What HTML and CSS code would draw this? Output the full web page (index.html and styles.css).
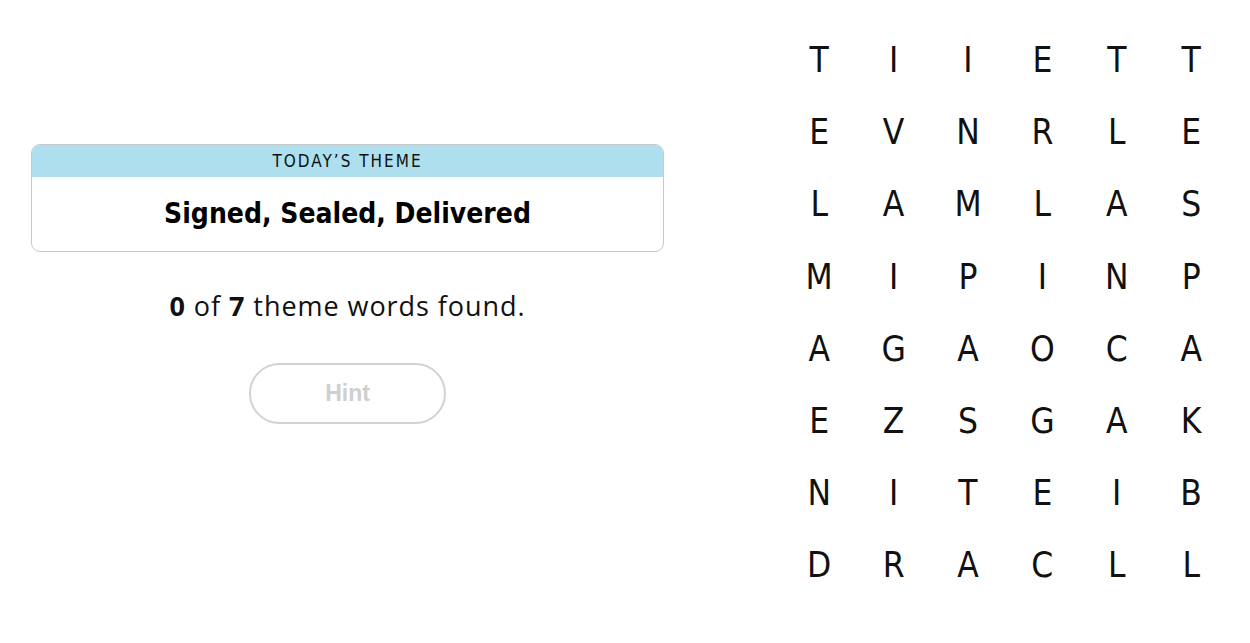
FILE: index.html
```html
<!DOCTYPE html>
<html lang="en">
<head>
<meta charset="utf-8">
<title>Strands</title>
<link rel="stylesheet" href="styles.css">
</head>
<body>
<main class="game">
  <section class="info">
    <div class="theme-card">
      <div class="theme-label">TODAY’S THEME</div>
      <div class="theme-title">Signed, Sealed, Delivered</div>
    </div>
    <p class="progress"><b>0</b> of <b>7</b> theme words found.</p>
    <button class="hint" type="button">Hint</button>
  </section>
  <section class="board">
    <span>T</span><span>I</span><span>I</span><span>E</span><span>T</span><span>T</span>
    <span>E</span><span>V</span><span>N</span><span>R</span><span>L</span><span>E</span>
    <span>L</span><span>A</span><span>M</span><span>L</span><span>A</span><span>S</span>
    <span>M</span><span>I</span><span>P</span><span>I</span><span>N</span><span>P</span>
    <span>A</span><span>G</span><span>A</span><span>O</span><span>C</span><span>A</span>
    <span>E</span><span>Z</span><span>S</span><span>G</span><span>A</span><span>K</span>
    <span>N</span><span>I</span><span>T</span><span>E</span><span>I</span><span>B</span>
    <span>D</span><span>R</span><span>A</span><span>C</span><span>L</span><span>L</span>
  </section>
</main>
</body>
</html>
```
FILE: styles.css
```css
html, body {
  margin: 0;
  padding: 0;
  background: #fff;
  color: #000;
}
body {
  font-family: "Open Sans", "Liberation Sans", Arial, sans-serif;
  width: 1250px;
  height: 643px;
  overflow: hidden;
}
.game {
  display: flex;
  align-items: flex-start;
}
.info {
  width: 633px;
  margin-left: 31px;
  padding-top: 144px;
  display: flex;
  flex-direction: column;
  align-items: center;
}
.theme-card {
  width: 100%;
  box-sizing: border-box;
  border: 1px solid #c8c8c8;
  border-radius: 9px;
  overflow: hidden;
  height: 108px;
}
.theme-label {
  background: #aedfee;
  height: 32px;
  line-height: 33px;
  text-align: center;
  font-family: "DejaVu Sans Condensed", "Liberation Sans", sans-serif;
  font-size: 17px;
  letter-spacing: 2px;
  color: #111;
}
.theme-title {
  text-align: center;
  font-family: "DejaVu Sans Condensed", "Liberation Sans", sans-serif;
  font-weight: bold;
  font-size: 28px;
  line-height: 74px;
  color: #000;
}
.progress {
  margin: 37px 0 0;
  font-size: 27px;
  line-height: 34px;
  letter-spacing: 0.95px;
  color: #111;
}
.progress b { font-weight: bold; }
.hint {
  margin-top: 40px;
  width: 197px;
  height: 61px;
  border: 2px solid #d2d2d2;
  border-radius: 31px;
  background: #fff;
  color: #cfcfcf;
  font-family: "Liberation Sans", Arial, sans-serif;
  font-weight: bold;
  font-size: 23px;
  padding: 0;
}
.board {
  margin-left: 118px;
  margin-top: 24px;
  display: grid;
  grid-template-columns: repeat(6, 74.4px);
  grid-auto-rows: 72.2px;
}
.board span {
  display: flex;
  align-items: center;
  justify-content: center;
  font-family: "DejaVu Sans Condensed", "Liberation Sans", sans-serif;
  font-size: 35px;
  color: #111;
}
```
